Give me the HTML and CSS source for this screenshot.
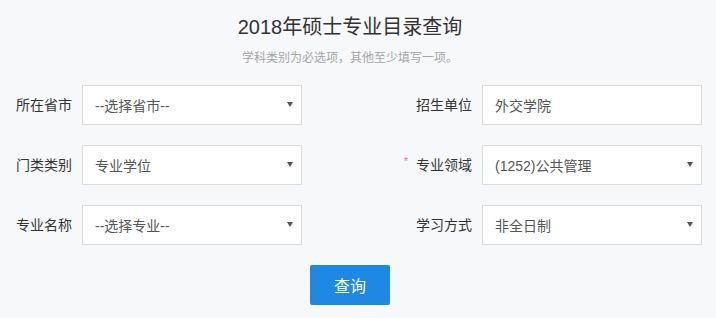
FILE: index.html
```html
<!DOCTYPE html>
<html lang="zh-CN">
<head>
<meta charset="utf-8">
<title>2018年硕士专业目录查询</title>
<link rel="stylesheet" href="styles.css">
</head>
<body>
<div class="page">
  <header class="head">
    <h1 class="title">2018年硕士专业目录查询</h1>
    <p class="tip">学科类别为必选项，其他至少填写一项。</p>
  </header>
  <form class="form">
    <label class="lbl">所在省市</label>
    <div class="sel"><span class="val">--选择省市--</span></div>
    <label class="lbl lbl-r">招生单位</label>
    <div class="inp"><span class="val">外交学院</span></div>

    <label class="lbl">门类类别</label>
    <div class="sel"><span class="val">专业学位</span></div>
    <label class="lbl lbl-r"><span class="req">*</span>专业领域</label>
    <div class="sel"><span class="val">(1252)公共管理</span></div>

    <label class="lbl">专业名称</label>
    <div class="sel"><span class="val">--选择专业--</span></div>
    <label class="lbl lbl-r">学习方式</label>
    <div class="sel"><span class="val">非全日制</span></div>
  </form>
  <div class="actions">
    <button class="btn" type="button">查询</button>
  </div>
</div>
</body>
</html>
```
FILE: styles.css
```css
html, body {
  margin: 0;
  padding: 0;
  background: #f7f8fa;
}
body {
  font-family: "Liberation Sans", "Noto Sans CJK SC", sans-serif;
  color: #333;
}
.page {
  width: 700px;
}
.head {
  text-align: center;
  padding-top: 14px;
}
.title {
  margin: 0;
  font-size: 20px;
  font-weight: normal;
  line-height: 26px;
  color: #333;
}
.tip {
  margin: 8px 0 0;
  font-size: 12px;
  line-height: 20px;
  color: #a5a5a5;
}
.form {
  display: grid;
  grid-template-columns: 56px 220px 160px 220px;
  column-gap: 10px;
  row-gap: 20px;
  padding-left: 16px;
  margin-top: 17px;
}
.lbl {
  font-size: 14px;
  color: #333;
  display: flex;
  align-items: center;
  margin-top: -2px;
}
.lbl-r {
  justify-content: flex-end;
}
.req {
  color: #e8706f;
  font-size: 11px;
  margin-right: 8px;
  align-self: center;
  margin-top: -6px;
}
.sel, .inp {
  position: relative;
  box-sizing: border-box;
  height: 40px;
  background: #fff;
  border: 1px solid #dcdcdc;
  display: flex;
  align-items: center;
  padding: 0 12px 1px;
  font-size: 14px;
  color: #555;
}
.sel::after {
  content: "";
  position: absolute;
  right: 8px;
  top: 16px;
  border-left: 3px solid transparent;
  border-right: 3px solid transparent;
  border-top: 5px solid #555;
}
.actions {
  display: flex;
  justify-content: center;
  margin-top: 20px;
}
.btn {
  width: 80px;
  height: 40px;
  border: 0;
  border-radius: 2px;
  background: #1e88e5;
  color: #fff;
  font-family: "Liberation Sans", "Noto Sans CJK SC", sans-serif;
  font-size: 16px;
  padding: 0;
}
```
